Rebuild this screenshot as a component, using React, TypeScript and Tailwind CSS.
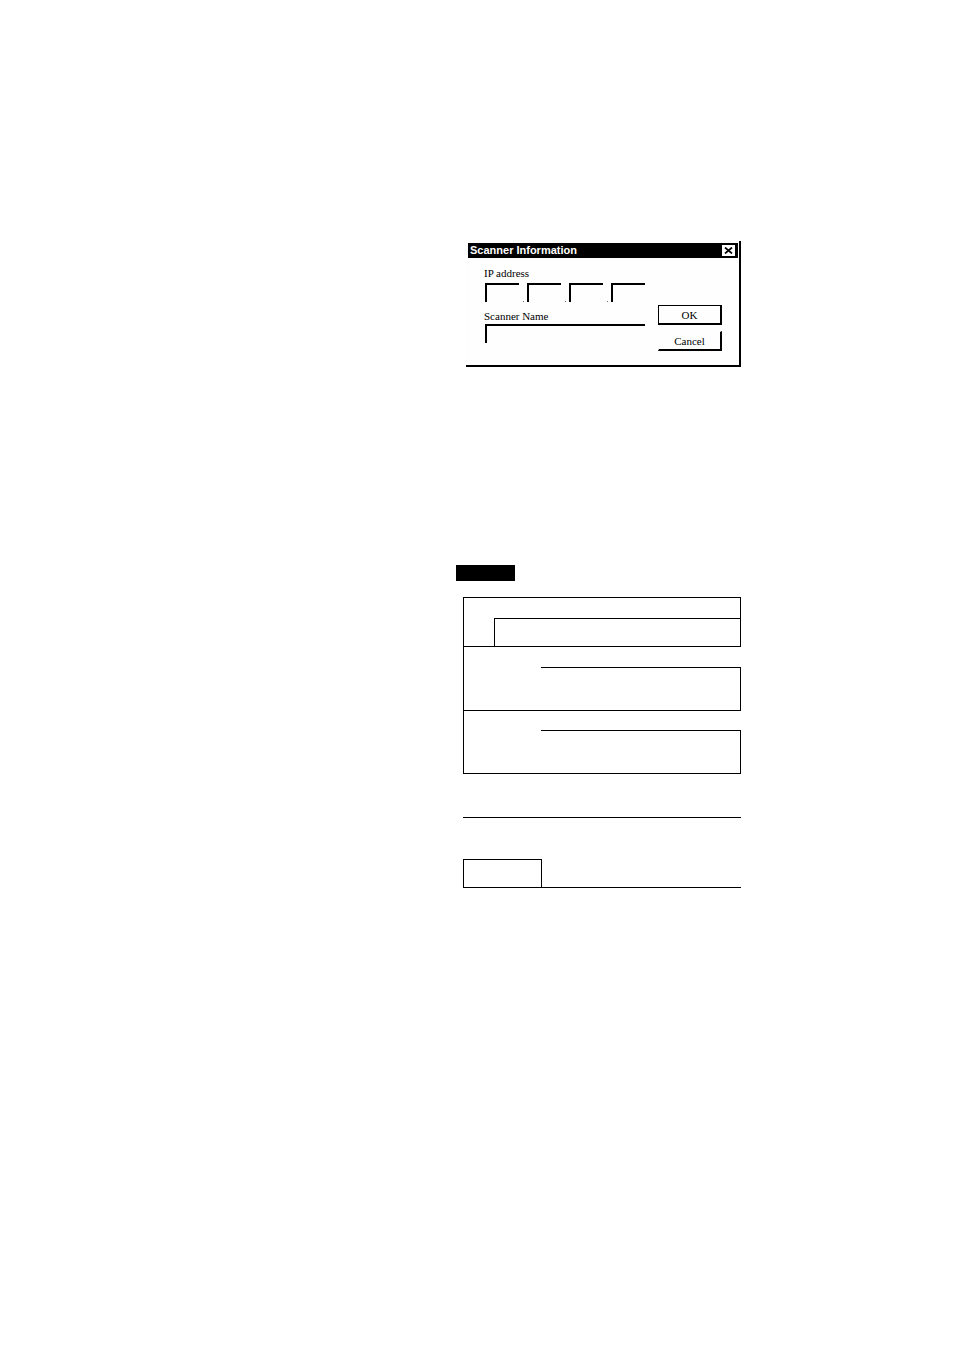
import React from 'react';

const OCTETS = [1, 2, 3, 4];

const FIELD =
  'block bg-transparent border-t-2 border-l-2 border-black px-1 text-[11px] leading-4 outline-none';

function ScannerDialog() {
  return (
    <section
      role="dialog"
      aria-labelledby="scanner-title"
      className="ml-[10px] border-r-2 border-b-2 border-black bg-[#fefefe] pt-[2px] pl-[2px] pr-px pb-[14px]"
    >
      <header className="flex h-[15px] items-center justify-between bg-black pl-[2px] pr-[3px]">
        <h1
          id="scanner-title"
          className="font-['Liberation_Sans',Arial,sans-serif] text-[11px] leading-[15px] font-bold text-white"
        >
          Scanner Information
        </h1>
        <button type="button" aria-label="Close" className="flex h-[11px] w-[13px] items-center justify-center bg-white">
          <svg viewBox="0 0 9 7" className="h-[7px] w-[9px]">
            <path d="M1 0.5L8 6.5M8 0.5L1 6.5" stroke="#000" strokeWidth="1.7" fill="none" />
          </svg>
        </button>
      </header>

      <form className="flex justify-between pt-[9px] pl-4 pr-4 text-[11px] text-black" onSubmit={e => e.preventDefault()}>
        <div className="w-[161px] pb-2">
          <fieldset>
            <legend className="leading-[13px]">IP address</legend>
            <div className="mt-[3px] ml-px flex items-end justify-between">
              {OCTETS.map(n => (
                <React.Fragment key={n}>
                  {n > 1 && <span className="h-px w-px bg-gray-500" />}
                  <input type="text" aria-label={`IP address part ${n}`} className={`${FIELD} h-[19px] w-[34px]`} />
                </React.Fragment>
              ))}
            </div>
          </fieldset>
          <label htmlFor="scanner-name" className="mt-2 block leading-[13px]">
            Scanner Name
          </label>
          <div className="mt-px pl-px">
            <input id="scanner-name" type="text" className={`${FIELD} h-[19px] w-full`} />
          </div>
        </div>

        <div className="flex w-[64px] flex-col justify-end gap-[6px]">
          <button type="submit" className="h-5 border border-r-2 border-b-2 border-black text-center leading-4">
            OK
          </button>
          <button type="button" className="h-5 border border-r-2 border-b-2 border-transparent border-r-black border-b-black text-center leading-4">
            Cancel
          </button>
        </div>
      </form>
    </section>
  );
}

// Ruled form under the dialog: every cell is blank, only the lines show.
function RuledForm() {
  return (
    <div className="ml-[7px]">
      <div className="border-l border-black">
        <div className="border-t border-r border-b border-black pt-5">
          <div className="ml-[30px] h-7 border-t border-l border-black" />
        </div>
        <div className="border-b border-black pt-5">
          <div className="ml-[77px] h-[43px] border-t border-r border-black" />
        </div>
        <div className="border-b border-black pt-[19px]">
          <div className="ml-[77px] h-[43px] border-t border-r border-black" />
        </div>
      </div>
      <hr className="mt-[43px] border-black" />
      <div className="mt-[41px] border-b border-black">
        <div className="h-7 w-[79px] border-t border-r border-l border-black" />
      </div>
    </div>
  );
}

export default function App() {
  return (
    <main className="min-h-screen bg-white pt-[241px] pl-[456px] pr-[213px] font-['Liberation_Serif','Times_New_Roman',serif]">
      <ScannerDialog />
      <div className="mt-[198px] mb-4 h-4 w-[59px] bg-black" />
      <RuledForm />
    </main>
  );
}
